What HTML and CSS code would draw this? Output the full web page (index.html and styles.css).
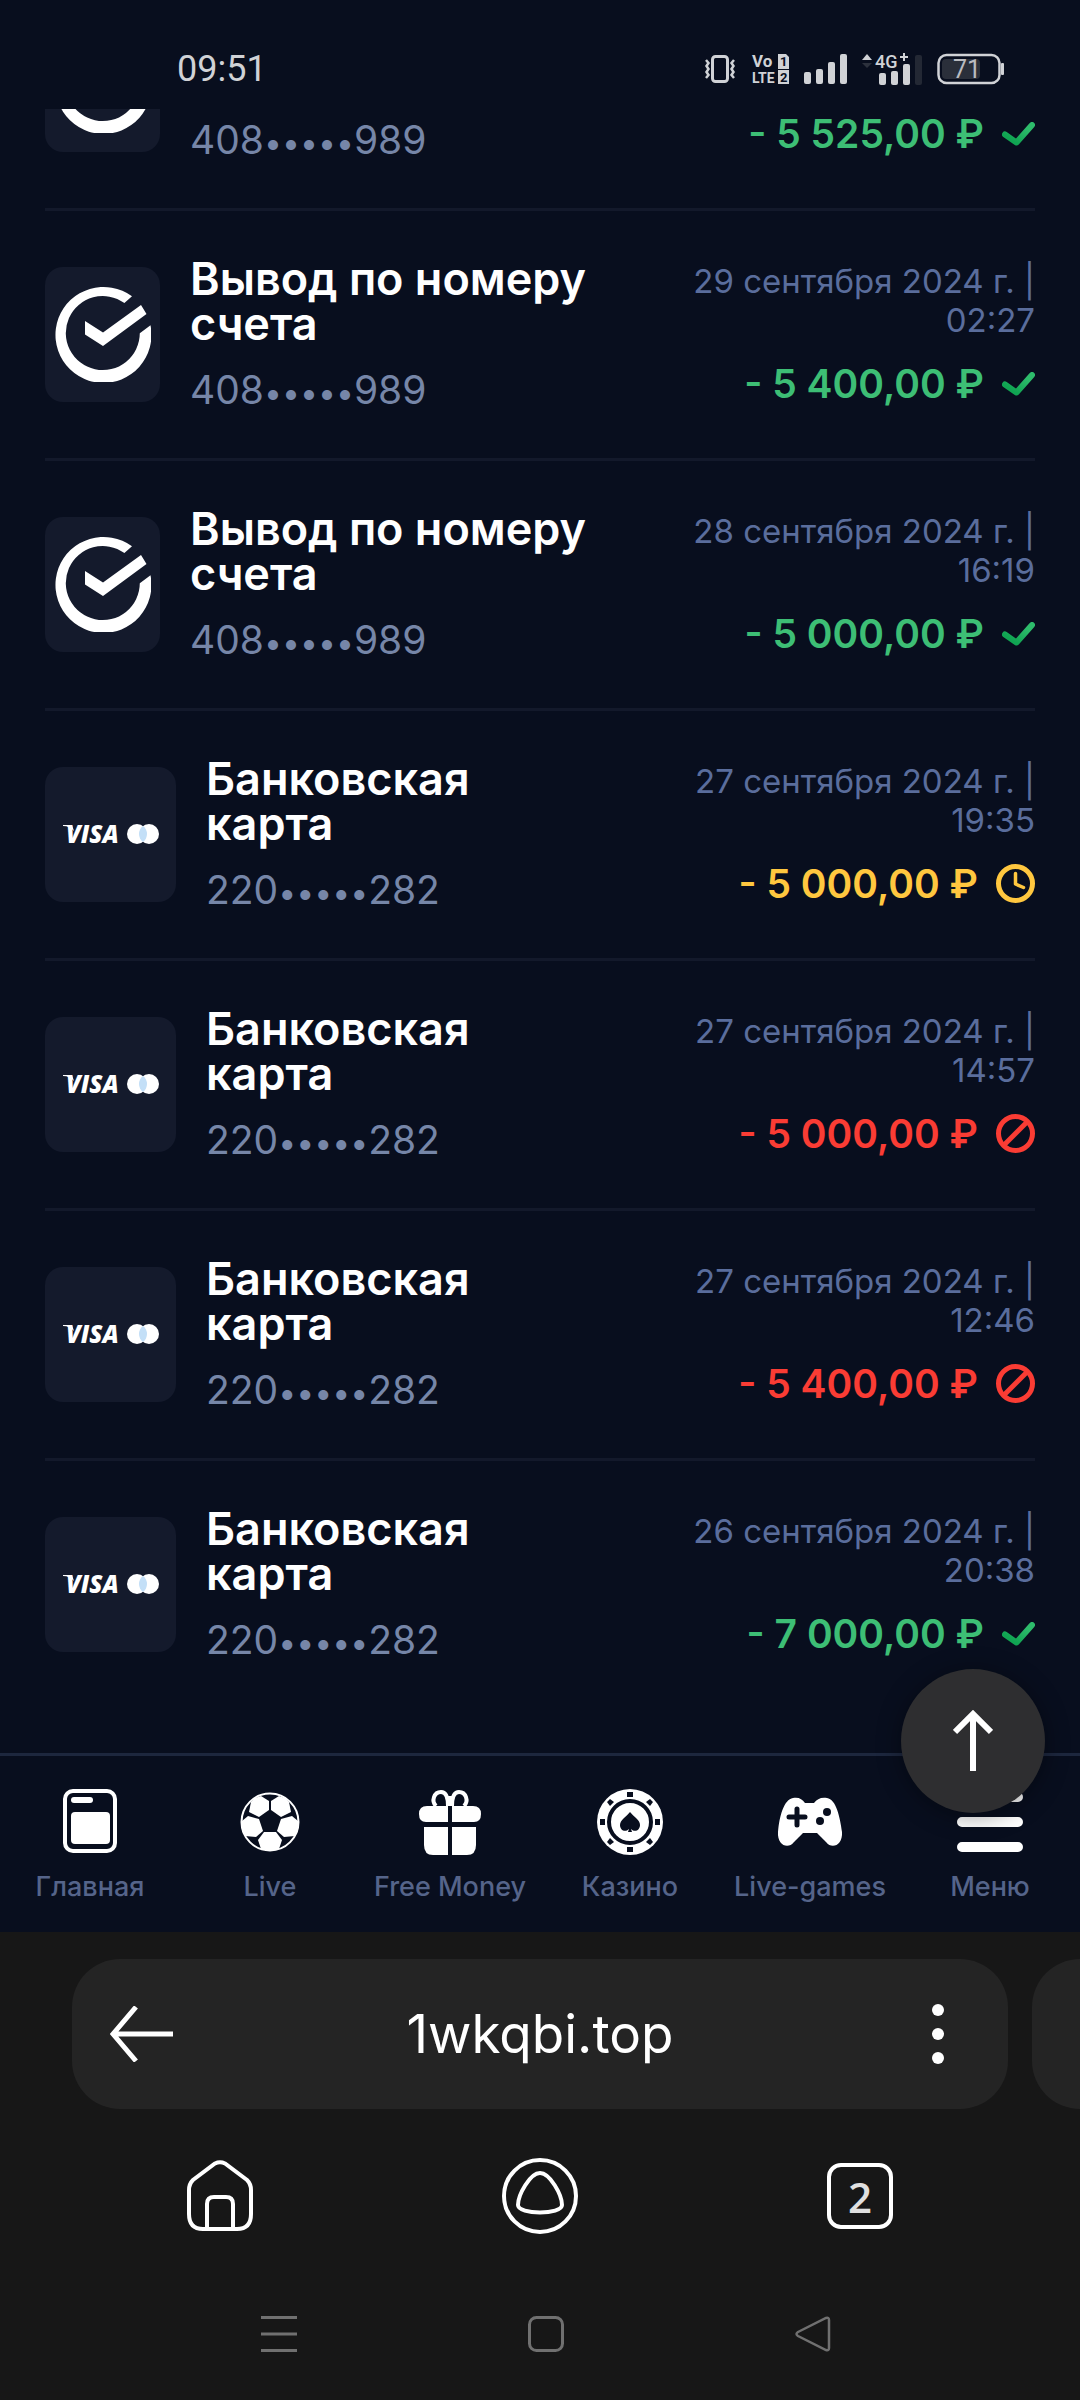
FILE: index.html
```html
<!DOCTYPE html>
<html lang="ru">
  <head>
    <meta charset="UTF-8" />
    <meta name="viewport" content="width=device-width, initial-scale=1.0" />
    <title>История выводов</title>
    <link rel="stylesheet" href="styles.css">
  </head>
  <body>
    <!-- Shared icons -->
    <svg class="sprite" aria-hidden="true">
      <defs>
        <linearGradient id="green" x1="0" y1="1" x2="1" y2="0">
          <stop offset="0.2" stop-color="#10a452" />
          <stop offset="0.8" stop-color="#2dbb6b" />
        </linearGradient>
        <symbol id="check" viewBox="0 0 33 24">
          <path d="M3 12.500 14.500 20.500 30 3" fill="none" stroke="url(#green)" stroke-width="6" stroke-linecap="round" stroke-linejoin="round" />
        </symbol>
        <symbol id="clock" viewBox="0 0 39 39">
          <circle cx="19.500" cy="19.500" r="17" fill="none" stroke="currentColor" stroke-width="5" />
          <path d="M19.500 9.500V20L27.500 23.500" fill="none" stroke="currentColor" stroke-width="3.500" stroke-linecap="round" stroke-linejoin="round" />
        </symbol>
        <symbol id="ban" viewBox="0 0 39 39">
          <circle cx="19.500" cy="19.500" r="17" fill="none" stroke="currentColor" stroke-width="5" />
          <path d="M8 31 31 8" stroke="currentColor" stroke-width="5" />
        </symbol>
        <symbol id="account" viewBox="0 0 96 96">
          <path d="M95.500 39.300A48 48 0 1 1 77 10.300L69.400 17A37 37 0 1 0 84.800 47.300ZM30 35 48 46.500 86 19 91.500 28 48 60 30 48.500Z" fill="#fff" />
        </symbol>
        <symbol id="card" viewBox="0 0 96 24">
          <path d="M0 3H9L11 9C8 6 5 4 0 4Z" fill="#fff" />
          <text x="3" y="21" class="visa">VISA</text>
          <circle cx="74" cy="12" r="10" fill="#fff" />
          <circle cx="86" cy="12" r="10" fill="#fff" />
          <path d="M80 4A10 10 0 0 1 80 20A10 10 0 0 1 80 4Z" fill="#c3dff7" />
        </symbol>
      </defs>
    </svg>

    <header class="status-bar">
      <span class="time">09:51</span>
      <div class="status-icons">
        <svg width="32" height="30" viewBox="0 0 32 30">
          <rect x="8.500" y="2.500" width="15" height="25" rx="3" fill="none" stroke="#d0d2d6" stroke-width="3" />
          <path d="M2 6l2.500 3-2 3 2 3-2 3 2 3-2.500 3M30 6l-2.500 3 2 3-2 3 2 3-2 3 2.500 3" fill="none" stroke="#d0d2d6" stroke-width="2.500" />
        </svg>
        <svg class="volte" width="38" height="32" viewBox="0 0 38 32">
          <text x="1" y="14">Vo</text>
          <text x="1" y="30" class="lte">LTE</text>
          <path d="M27 1h8l3 3v12H27ZM27 17h11v14H27Z" fill="#d0d2d6" />
          <text x="29" y="13" class="sim">1</text>
          <text x="29" y="29" class="sim">2</text>
        </svg>
        <svg width="43" height="30" viewBox="0 0 43 30" fill="#d0d2d6">
          <rect x="0" y="18" width="7" height="12" rx="2" />
          <rect x="12" y="15" width="7" height="15" rx="2" />
          <rect x="24" y="8" width="7" height="22" rx="2" />
          <rect x="36" y="0" width="7" height="30" rx="2" />
        </svg>
        <svg class="mobile" width="60" height="34" viewBox="0 0 60 34" fill="#d0d2d6">
          <path d="M0 8 5 2 10 8Z" />
          <path d="M0 11 5 16 10 11Z" fill="#2c313d" />
          <rect x="17" y="21" width="7" height="12" rx="2" />
          <rect x="29" y="19" width="7" height="14" rx="2" />
          <rect x="41" y="12" width="7" height="21" rx="2" />
          <rect x="53" y="3" width="7" height="30" rx="2" fill="#232834" />
          <text x="13" y="16">4G</text>
          <path d="M42 1V9M38 5H46" stroke="#d0d2d6" stroke-width="2" />
        </svg>
        <svg class="battery" width="68" height="32" viewBox="0 0 68 32">
          <rect x="1.500" y="2" width="61" height="28" rx="8" fill="none" stroke="#d0d2d6" stroke-width="2.500" />
          <rect x="5" y="6" width="38" height="20" rx="4" fill="#2a2f3a" />
          <rect x="64" y="10" width="3" height="12" rx="1" fill="#d0d2d6" />
          <text x="30" y="25" text-anchor="middle">71</text>
        </svg>
      </div>
    </header>

    <main class="history">
      <ul class="operations">
        <li class="operation cut">
          <div class="method"><svg width="96" height="96"><use href="#account" /></svg></div>
          <div class="info">
            <p>408<span>•••••</span>989</p>
          </div>
          <div class="details">
            <div class="amount done">- 5 525,00 ₽ <svg width="33" height="24"><use href="#check" /></svg></div>
          </div>
        </li>
        <li class="operation">
          <div class="method"><svg width="96" height="96"><use href="#account" /></svg></div>
          <div class="info">
            <h2>Вывод по номеру счета</h2>
            <p>408<span>•••••</span>989</p>
          </div>
          <div class="details">
            <time>29 сентября 2024 г. | 02:27</time>
            <div class="amount done">- 5 400,00 ₽ <svg width="33" height="24"><use href="#check" /></svg></div>
          </div>
        </li>
        <li class="operation">
          <div class="method"><svg width="96" height="96"><use href="#account" /></svg></div>
          <div class="info">
            <h2>Вывод по номеру счета</h2>
            <p>408<span>•••••</span>989</p>
          </div>
          <div class="details">
            <time>28 сентября 2024 г. | 16:19</time>
            <div class="amount done">- 5 000,00 ₽ <svg width="33" height="24"><use href="#check" /></svg></div>
          </div>
        </li>
        <li class="operation">
          <div class="method bank"><svg width="96" height="24"><use href="#card" /></svg></div>
          <div class="info">
            <h2>Банковская карта</h2>
            <p>220<span>•••••</span>282</p>
          </div>
          <div class="details">
            <time>27 сентября 2024 г. | 19:35</time>
            <div class="amount pending">- 5 000,00 ₽ <svg width="39" height="39"><use href="#clock" /></svg></div>
          </div>
        </li>
        <li class="operation">
          <div class="method bank"><svg width="96" height="24"><use href="#card" /></svg></div>
          <div class="info">
            <h2>Банковская карта</h2>
            <p>220<span>•••••</span>282</p>
          </div>
          <div class="details">
            <time>27 сентября 2024 г. | 14:57</time>
            <div class="amount rejected">- 5 000,00 ₽ <svg width="39" height="39"><use href="#ban" /></svg></div>
          </div>
        </li>
        <li class="operation">
          <div class="method bank"><svg width="96" height="24"><use href="#card" /></svg></div>
          <div class="info">
            <h2>Банковская карта</h2>
            <p>220<span>•••••</span>282</p>
          </div>
          <div class="details">
            <time>27 сентября 2024 г. | 12:46</time>
            <div class="amount rejected">- 5 400,00 ₽ <svg width="39" height="39"><use href="#ban" /></svg></div>
          </div>
        </li>
        <li class="operation">
          <div class="method bank"><svg width="96" height="24"><use href="#card" /></svg></div>
          <div class="info">
            <h2>Банковская карта</h2>
            <p>220<span>•••••</span>282</p>
          </div>
          <div class="details">
            <time>26 сентября 2024 г. | 20:38</time>
            <div class="amount done">- 7 000,00 ₽ <svg width="33" height="24"><use href="#check" /></svg></div>
          </div>
        </li>
      </ul>
    </main>

    <nav class="tab-bar">
      <a href="#">
        <svg width="66" height="66" viewBox="0 0 66 66">
          <rect x="8" y="2" width="50" height="60" rx="8" fill="none" stroke="#fff" stroke-width="4" />
          <rect x="14" y="8" width="22" height="6" rx="3" fill="#fff" />
          <rect x="14" y="23" width="39" height="32" rx="4" fill="#fff" />
        </svg>
        <span>Главная</span>
      </a>
      <a href="#">
        <svg width="66" height="66" viewBox="0 0 66 66">
          <circle cx="33" cy="33" r="28.500" fill="none" stroke="#fff" stroke-width="2" />
          <g fill="#fff">
            <path d="M24 7 32 12V21L22 28 12 23 14 13 18 9Z" />
            <path d="M42 7 34 12V21L44 28 54 23 52 13 48 9Z" />
            <path d="M11 27 22 30 26 42 19 48 8 47 5 42 5 32Z" />
            <path d="M55 27 44 30 40 42 47 48 58 47 61 42 61 32Z" />
            <path d="M27 43H39L45 51 42 60 33 62 24 60 21 51Z" />
          </g>
        </svg>
        <span>Live</span>
      </a>
      <a href="#">
        <svg width="66" height="66" viewBox="0 0 66 66">
          <path d="M31 17C31 7 28 3 24 3C17 3 14 12 19 17M35 17C35 7 38 3 42 3C49 3 52 12 47 17M33 7V17" fill="none" stroke="#fff" stroke-width="4" />
          <path d="M10 17H31V33H9Q2 33 2 25Q2 17 10 17ZM35 17H56Q64 17 64 25Q64 33 57 33H35ZM7 38H31V66H16Q7 66 7 56ZM35 38H59V56Q59 66 50 66H35Z" fill="#fff" />
        </svg>
        <span>Free Money</span>
      </a>
      <a href="#">
        <svg width="66" height="66" viewBox="0 0 66 66">
          <circle cx="33" cy="33" r="33" fill="#fff" />
          <circle cx="33" cy="33" r="21" fill="none" stroke="#080e1e" stroke-width="4" />
          <g fill="#080e1e">
            <path d="M30 3H36V8H30ZM30 58H36V63H30ZM3 30H8V36H3ZM58 30H63V36H58Z" />
            <path d="M13 10 17 13 13 17 10 13ZM53 10 56 13 53 17 49 13ZM13 49 17 53 13 56 10 53ZM53 49 56 53 53 56 49 53Z" />
            <path d="M33 23C37 28 43 31 43 36C43 41 38 44 34 40L35 43H31L32 40C28 44 23 41 23 36C23 31 29 28 33 23Z" />
          </g>
        </svg>
        <span>Казино</span>
      </a>
      <a href="#">
        <svg width="66" height="66" viewBox="0 0 66 66">
          <path d="M16 9C22 8 25 10 28 14H37C40 10 44 8 50 9C59 10 63 28 65 43C66 56 55 61 49 53L40 44H26L17 53C11 61 0 56 1 43C2 28 7 10 16 9Z" fill="#fff" />
          <path d="M20 20V36M12 28H28" stroke="#080e1e" stroke-width="5" stroke-linecap="round" />
          <circle cx="50" cy="23" r="4" fill="#080e1e" />
          <circle cx="43" cy="32" r="4" fill="#080e1e" />
        </svg>
        <span>Live-games</span>
      </a>
      <a href="#">
        <svg width="66" height="66" viewBox="0 0 66 66">
          <path d="M5 8H61M5 33H61M5 58H61" stroke="#fff" stroke-width="10" stroke-linecap="round" />
        </svg>
        <span>Меню</span>
      </a>
      <button class="scroll-top" aria-label="Наверх">
        <svg width="40" height="62" viewBox="0 0 40 62">
          <path d="M20 3V61M2 22 20 4 38 22" fill="none" stroke="#fff" stroke-width="6" />
        </svg>
      </button>
    </nav>

    <footer class="browser">
      <div class="address-row">
        <div class="address">
          <button aria-label="Назад">
            <svg width="64" height="56" viewBox="0 0 64 56">
              <path d="M3 28H63M26 1 3 28 26 55" fill="none" stroke="#fff" stroke-width="5" />
            </svg>
          </button>
          <span>1wkqbi.top</span>
          <button aria-label="Ещё">
            <svg width="64" height="60" viewBox="0 0 64 60" fill="#fff">
              <circle cx="32" cy="6" r="6" />
              <circle cx="32" cy="30" r="6" />
              <circle cx="32" cy="54" r="6" />
            </svg>
          </button>
        </div>
        <div class="address next"></div>
      </div>

      <div class="toolbar">
        <button aria-label="Домой">
          <svg width="66" height="72" viewBox="0 0 66 72" fill="none" stroke="#fff" stroke-width="4">
            <path d="M28 3.500Q33 1 38 3.500L60 20Q64 24 64 30V54Q64 69 50 69H16Q2 69 2 54V30Q2 24 6 20Z" />
            <path d="M20 69V44Q20 37 27 37H39Q46 37 46 44V69" />
          </svg>
        </button>
        <button aria-label="Алиса">
          <svg width="76" height="76" viewBox="0 0 76 76" fill="none" stroke="#fff" stroke-width="4">
            <circle cx="38" cy="38" r="36" />
            <path d="M38 15C48 15 60 37 60 47C60 57 16 57 16 47C16 37 28 15 38 15Z" />
          </svg>
        </button>
        <button class="tabs" aria-label="Вкладки">2</button>
      </div>

      <div class="system-nav">
        <button aria-label="Недавние">
          <svg width="36" height="36" viewBox="0 0 36 36"><path d="M0 1.500H36M0 18H36M0 34.500H36" stroke="#707070" stroke-width="3" /></svg>
        </button>
        <button aria-label="Главный экран">
          <svg width="36" height="36" viewBox="0 0 36 36"><rect x="1.500" y="1.500" width="33" height="33" rx="7" fill="none" stroke="#707070" stroke-width="3" /></svg>
        </button>
        <button aria-label="Назад">
          <svg width="36" height="36" viewBox="0 0 36 36"><path d="M3 16 31 2Q34 1 34 4V32Q34 35 31 34L3 20Q0 18 3 16Z" fill="none" stroke="#707070" stroke-width="2.500" /></svg>
        </button>
      </div>
    </footer>
  </body>
</html>
```
FILE: styles.css
```css
* {
  box-sizing: border-box;
}

body {
  margin: 0;
  height: 100vh;
  display: flex;
  flex-direction: column;
  background-color: #080e1e;
  color: #ffffff;
  font-family: Inter, Roboto, sans-serif;
}

button {
  display: flex;
  justify-content: center;
  align-items: center;
  padding: 0;
  border: none;
  background: none;
  color: inherit;
  font-family: inherit;
  cursor: pointer;
}

svg {
  display: block;
  flex-shrink: 0;
}

.sprite {
  position: absolute;
  width: 0;
  height: 0;
}

/* Phone status bar */
.status-bar {
  display: flex;
  justify-content: space-between;
  align-items: center;
  flex-shrink: 0;
  height: 109px;
  padding: 28px 75px 0 177px;
  color: #d0d2d6;
  font-family: Roboto, sans-serif;
}

.time {
  font-size: 36px;
}

.status-icons {
  display: flex;
  align-items: center;
  gap: 15px;
}

.volte text {
  fill: #d0d2d6;
  font: bold 17px Roboto, sans-serif;
}

.volte .lte {
  font-size: 14px;
}

.volte .sim {
  fill: #080e1e;
  font-size: 13px;
}

.mobile text {
  font: 500 18px Roboto, sans-serif;
}

.battery text {
  fill: #b9bbc0;
  font: 25px Roboto, sans-serif;
}

.history {
  flex: 1;
  min-height: 0;
  display: flex;
  flex-direction: column;
  justify-content: flex-end;
  overflow: hidden;
  padding: 0 45px 45px;
}

.operations {
  margin: 0;
  padding: 0;
  list-style: none;
}

.operation {
  display: flex;
  align-items: center;
  padding: 45px 0 46px;
  border-bottom: 3px solid #13192b;
}

.operation:last-child {
  border-bottom: none;
}

.method {
  display: flex;
  justify-content: center;
  align-items: center;
  flex-shrink: 0;
  width: 115px;
  height: 135px;
  margin-right: 30px;
  border-radius: 18px;
  background-color: #141a2c;
}

.method.bank {
  width: 131px;
}

/* Row half hidden by the status bar */
.operation.cut {
  align-items: flex-end;
}

.cut .method {
  margin-bottom: 10px;
}

.cut .details {
  margin-bottom: 6px;
}

.visa {
  fill: #ffffff;
  font: italic 800 24px "Open Sans", sans-serif;
}

.info {
  flex: 1;
}

.info h2 {
  margin: 0 0 21px;
  font-size: 45px;
  font-weight: 600;
  line-height: 45px;
}

.info p {
  margin: 0;
  color: #7686a8;
  font-size: 39px;
  line-height: 45px;
}

.info p span {
  font-size: 32px;
  line-height: 32px;
}

.details {
  width: 42%;
  margin-left: 24px;
  text-align: right;
}

.details time {
  display: block;
  margin-bottom: 21px;
  color: #5a6d9c;
  font-size: 33px;
  line-height: 39px;
}

.amount {
  display: flex;
  justify-content: flex-end;
  align-items: center;
  gap: 18px;
  font-size: 39px;
  font-weight: 600;
  line-height: 45px;
}

.done {
  color: #3dbe75;
}

.pending {
  color: #ffc73f;
}

.rejected {
  color: #fa3c34;
}

/* Site tab bar */
.tab-bar {
  position: relative;
  display: flex;
  flex-shrink: 0;
  padding: 33px 0 28px;
  border-top: 3px solid #1d273e;
}

.tab-bar a {
  flex: 1;
  display: flex;
  flex-direction: column;
  align-items: center;
  gap: 15px;
  color: #55648a;
  font-size: 27px;
  font-weight: 500;
  line-height: 34px;
  text-decoration: none;
}

.scroll-top {
  position: absolute;
  top: -87px;
  right: 35px;
  width: 144px;
  height: 144px;
  border-radius: 50%;
  background-color: #2e2e30;
  box-shadow: 0 3px 24px rgba(0, 0, 0, 0.4);
}

/* Browser controls */
.browser {
  flex-shrink: 0;
  overflow: hidden;
  padding: 27px 0 28px;
  background-color: #171717;
}

.address-row {
  display: flex;
  gap: 24px;
  margin: 0 -48px 0 72px;
}

.address {
  flex: 1;
  display: flex;
  justify-content: space-between;
  align-items: center;
  height: 150px;
  padding: 0 38px;
  border-radius: 48px;
  background-color: #242424;
  font-size: 53px;
}

.address.next {
  flex: 0 0 96px;
}

.toolbar {
  display: flex;
  padding: 49px 60px 0;
}

.toolbar button,
.system-nav button {
  flex: 1;
  height: 76px;
}

.toolbar .tabs {
  flex: 0 0 66px;
  height: 66px;
  margin: 5px 127px;
  border: 4px solid #ffffff;
  border-radius: 14px;
  color: #e0e0e0;
  font: 600 42px "Open Sans", sans-serif;
}

.system-nav {
  display: flex;
  padding: 62px 134px 0 146px;
}
```
